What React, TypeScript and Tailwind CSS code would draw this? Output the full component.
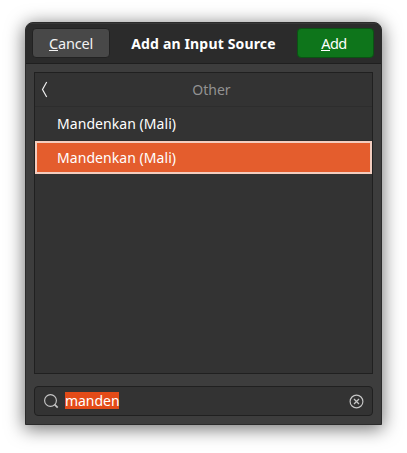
import type { ReactNode } from "react";

function HeaderButton({ children, className }: { children: ReactNode; className: string }) {
  return (
    <button
      className={`mb-px flex h-[30px] items-center justify-center rounded-[4px] border pb-px text-[14.5px] leading-none ${className}`}
    >
      {children}
    </button>
  );
}

function Mnemonic({ children }: { children: string }) {
  return <span className="inline-block h-[16px] border-b border-current leading-[17px]">{children}</span>;
}

export default function App() {
  return (
    <div className="h-[453px] w-[407px] overflow-hidden bg-white pt-[22px] pl-[25px] font-['Noto_Sans','Open_Sans',sans-serif] text-[14px] text-white">
      <div className="flex h-[403px] w-[357px] flex-col overflow-hidden rounded-t-[8px] border border-[#2b2b2b] bg-[#3d3d3d] shadow-[0_3px_18px_1px_rgba(0,0,0,0.55)]">
        <header className="flex h-[41px] shrink-0 items-center justify-between border-t border-b border-t-[#383838] border-b-[#1f1f1f] bg-[#2b2b2b] pr-[7px] pl-[6px]">
          <HeaderButton className="w-[78px] border-[#222222] bg-[#484848] text-[#f2f2f2]">
            <span className="tracking-[-0.15px]"><Mnemonic>C</Mnemonic>ancel</span>
          </HeaderButton>
          <h1 className="pb-px text-[14px] font-bold tracking-[0.16px] whitespace-nowrap">Add an Input Source</h1>
          <HeaderButton className="w-[77px] border-[#0b5214] bg-[#0e751b] pr-[3px] text-white">
            <span className="tracking-[-0.6px]"><Mnemonic>A</Mnemonic>dd</span>
          </HeaderButton>
        </header>
        <main className="flex flex-1 flex-col gap-3 px-2 pt-2 pb-2">
          <section className="flex h-[302px] w-[339px] flex-col border border-[#202020] bg-[#333333]">
            <div className="relative flex h-[34px] items-center justify-center border-b border-[#2d2d2d] text-[#929292]">
              <svg className="absolute top-[8px] left-[6px]" width="8" height="17" viewBox="0 0 8 17" fill="none" stroke="#eeeeee" strokeWidth="1.2">
                <path d="M5.7 1 1.5 8.5 5.7 16" />
              </svg>
              <span className="pl-4">Other</span>
            </div>
            <div className="flex h-[34px] items-center border-b border-[#2d2d2d] pl-[22px] tracking-[0.06px]">Mandenkan (Mali)</div>
            <div className="flex h-[33px] items-center border-2 border-[#f3cdbf] bg-[#e45d2d] pl-5 tracking-[0.06px]">Mandenkan (Mali)</div>
          </section>
          <div className="flex h-[30px] w-[339px] items-center rounded-[4px] border border-[#202020] bg-[#333333] pr-2 pl-[9px]">
            <svg width="15" height="15" viewBox="0 0 15 15" fill="none" stroke="#c6c6c6" strokeWidth="1.15">
              <circle cx="6.5" cy="6.5" r="5.9" />
              <path d="m10.7 10.7 3 3" strokeWidth="1.7" />
            </svg>
            <span className="mb-px ml-[6px] h-[17px] w-[54px] bg-[#e34b18] leading-[17px] tracking-[-0.04px] whitespace-nowrap">manden</span>
            <svg className="ml-auto" width="15" height="15" viewBox="0 0 15 15" fill="none" stroke="#c6c6c6" strokeWidth="1.15">
              <circle cx="7.5" cy="7.5" r="6.4" />
              <path d="m5 5 5 5m0-5-5 5" strokeWidth="1.3" />
            </svg>
          </div>
        </main>
      </div>
    </div>
  );
}
